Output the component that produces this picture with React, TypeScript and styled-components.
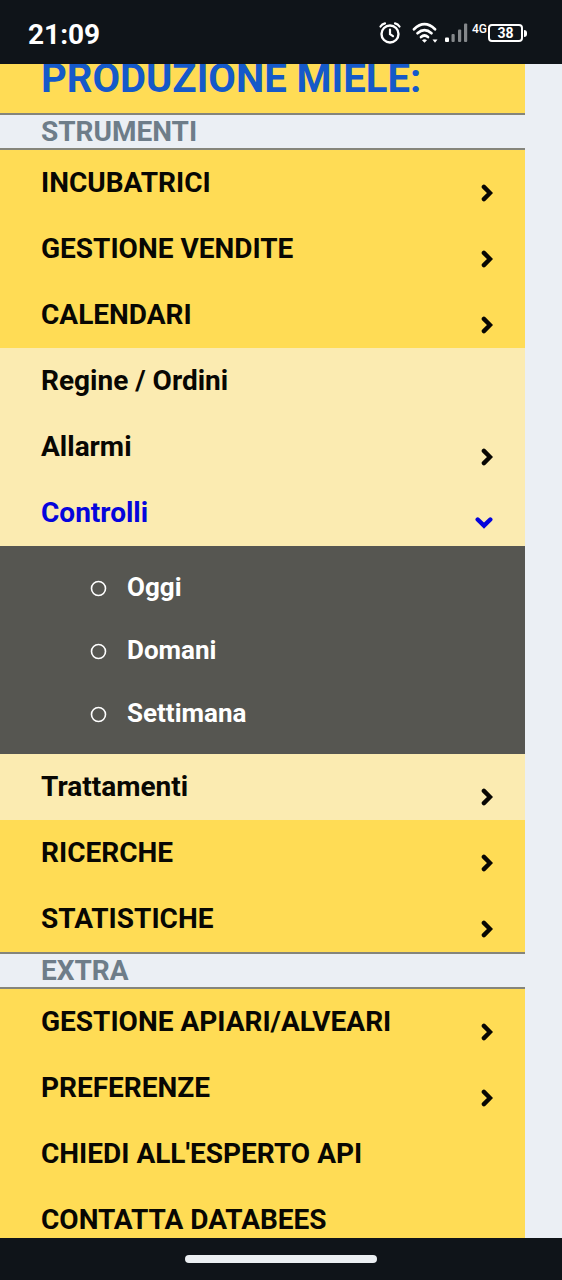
import React from "react";
import styled, { createGlobalStyle } from "styled-components";

const GlobalStyle = createGlobalStyle`
  *, *::before, *::after { box-sizing: border-box; }
  body { margin: 0; background: #ebeff4; font-family: Roboto, "Liberation Sans", sans-serif; }
  ul { list-style: none; margin: 0; padding: 0; }
`;

type Tone = "primary" | "pale";

const Screen = styled.div`
  display: flex;
  flex-direction: column;
  height: 100vh;
`;

const StatusBar = styled.header`
  display: flex;
  flex: none;
  align-items: flex-end;
  justify-content: space-between;
  height: 64px;
  padding: 0 35px 12px 28px;
  background: #0f1419;
  color: #fff;
`;

const Clock = styled.time`
  font-size: 28px;
  line-height: 34px;
  font-weight: 700;
`;

const StatusIcons = styled.div`
  display: flex;
  align-items: center;
  height: 38px;
  svg { display: block; }
`;

const AlarmSlot = styled.span`
  margin-right: 10px;
`;

const WifiSlot = styled.span`
  margin-right: 6px;
`;

const NetworkType = styled.span`
  align-self: flex-start;
  padding: 8px 1px 0 4px;
  font-size: 12px;
  line-height: 14px;
  font-weight: 500;
`;

const Battery = styled.span`
  display: flex;
  align-items: center;
  &::after {
    content: "";
    width: 3px;
    height: 7px;
    margin-left: 1px;
    border-radius: 0 3px 3px 0;
    background: #fff;
  }
`;

const BatteryLevel = styled.span`
  width: 35px;
  height: 18px;
  border: 2px solid #fff;
  border-radius: 4px;
  font-size: 14px;
  line-height: 14px;
  font-weight: 700;
  text-align: center;
`;

const Viewport = styled.main`
  flex: 1;
  min-height: 0;
  overflow: hidden;
  padding-right: 37px;
  background: #ebeff4;
`;

const Title = styled.h1`
  display: flex;
  align-items: flex-end;
  height: 49px;
  margin: 0;
  padding: 0 41px 10px;
  overflow: hidden;
  background: #ffdc55;
  color: #1559c9;
  font-size: 40px;
  line-height: 48px;
  font-weight: 700;
  white-space: nowrap;
`;

const SectionTitle = styled.h2`
  margin: 0;
  padding: 0 41px;
  border: solid #85857b;
  border-width: 2px 0;
  background: #ebeff4;
  color: #6e7d89;
  font-size: 28px;
  line-height: 33px;
  font-weight: 700;
`;

const MenuLink = styled.a<{ $tone: Tone; $open?: boolean }>`
  display: flex;
  align-items: center;
  justify-content: space-between;
  height: 66px;
  padding: 0 32px 0 41px;
  background: ${(p) => (p.$tone === "pale" ? "#fbebb1" : "#ffdc55")};
  color: ${(p) => (p.$open ? "#0505dc" : "#080703")};
  font-size: 28px;
  line-height: 34px;
  font-weight: 700;
  text-decoration: none;
  svg { flex: none; margin-top: 20px; }
`;

const SubMenu = styled.ul`
  && { padding: 9px 0 10px 90px; }
  background: #565651;
`;

const SubLink = styled.a`
  display: flex;
  align-items: center;
  gap: 20px;
  height: 63px;
  color: #fff;
  font-size: 26px;
  line-height: 32px;
  font-weight: 700;
  text-decoration: none;
  svg { margin-top: 4px; }
`;

const NavBar = styled.footer`
  display: flex;
  flex: none;
  justify-content: center;
  align-items: center;
  height: 42px;
  background: #0f1419;
`;

const HomeHandle = styled.div`
  width: 34%;
  height: 8px;
  border-radius: 4px;
  background: #ebeff2;
`;

const AlarmIcon = () => (
  <svg width="24" height="24" viewBox="0 0 24 24" fill="none" stroke="#fff" strokeLinecap="round" aria-hidden="true">
    <circle cx="12" cy="13" r="8.5" strokeWidth="2.4" />
    <path d="M12 8.5V13.2L15 15.2" strokeWidth="2.2" />
    <path d="M2.5 5.5Q4 3 7 2.4M21.5 5.5Q20 3 17 2.4" strokeWidth="2.2" />
  </svg>
);

const WifiIcon = () => (
  <svg width="27" height="22" viewBox="0 0 27 22" fill="none" stroke="#fff" strokeLinecap="round" aria-hidden="true">
    <path d="M2 7.2Q12.5 -2.8 23 7.2" strokeWidth="2.7" />
    <path d="M5.5 11.2Q12.5 5 19.5 11.2" strokeWidth="2.7" />
    <path d="M9 15Q12.5 12 16 15" strokeWidth="2.7" />
    <path d="M10 18.2Q12.5 16.5 15 18.2L12.5 20.8Z" fill="#fff" stroke="none" />
    <path d="M20.5 17.5H25.5L23 20.8Z" fill="#fff" stroke="none" />
  </svg>
);

const SignalIcon = () => (
  <svg width="23" height="20" viewBox="0 0 23 20" aria-hidden="true">
    <rect x="0" y="14.5" width="4" height="4.5" rx="1" fill="#fff" />
    <rect x="6.5" y="11" width="3.2" height="8" rx="1" fill="#85888b" />
    <rect x="13" y="6.5" width="3.2" height="12.5" rx="1" fill="#85888b" />
    <rect x="19" y="0.5" width="3.2" height="18.5" rx="1" fill="#85888b" />
  </svg>
);

const ChevronRight = () => (
  <svg width="12" height="18" viewBox="0 0 12 18" fill="none" stroke="currentColor" strokeWidth="4.4" strokeLinecap="round" aria-hidden="true">
    <path d="M2.9 2.9L9 9L2.9 15.1" />
  </svg>
);

const ChevronDown = () => (
  <svg width="18" height="12" viewBox="0 0 18 12" fill="none" stroke="currentColor" strokeWidth="4.4" strokeLinecap="round" aria-hidden="true">
    <path d="M2.7 2.5L9 8.6L15.3 2.5" />
  </svg>
);

const CircleIcon = () => (
  <svg width="17" height="17" viewBox="0 0 17 17" fill="none" stroke="#fff" strokeWidth="1.6" aria-hidden="true">
    <circle cx="8.5" cy="8.5" r="7" />
  </svg>
);

interface Entry {
  label: string;
  tone?: Tone;
  arrow?: boolean;
  children?: string[];
}

const tools: Entry[] = [
  { label: "INCUBATRICI", arrow: true },
  { label: "GESTIONE VENDITE", arrow: true },
  { label: "CALENDARI", arrow: true },
  { label: "Regine / Ordini", tone: "pale" },
  { label: "Allarmi", tone: "pale", arrow: true },
  { label: "Controlli", tone: "pale", children: ["Oggi", "Domani", "Settimana"] },
  { label: "Trattamenti", tone: "pale", arrow: true },
  { label: "RICERCHE", arrow: true },
  { label: "STATISTICHE", arrow: true },
];

const extras: Entry[] = [
  { label: "GESTIONE APIARI/ALVEARI", arrow: true },
  { label: "PREFERENZE", arrow: true },
  { label: "CHIEDI ALL'ESPERTO API" },
  { label: "CONTATTA DATABEES" },
];

const Menu = ({ entries }: { entries: Entry[] }) => (
  <ul>
    {entries.map(({ label, tone = "primary", arrow, children }) => (
      <li key={label}>
        <MenuLink href="#" $tone={tone} $open={!!children} aria-expanded={children ? true : undefined}>
          <span>{label}</span>
          {arrow && <ChevronRight />}
          {children && <ChevronDown />}
        </MenuLink>
        {children && (
          <SubMenu>
            {children.map((child) => (
              <li key={child}>
                <SubLink href="#">
                  <CircleIcon />
                  <span>{child}</span>
                </SubLink>
              </li>
            ))}
          </SubMenu>
        )}
      </li>
    ))}
  </ul>
);

export default function App() {
  return (
    <Screen>
      <GlobalStyle />
      <StatusBar>
        <Clock>21:09</Clock>
        <StatusIcons>
          <AlarmSlot><AlarmIcon /></AlarmSlot>
          <WifiSlot><WifiIcon /></WifiSlot>
          <SignalIcon />
          <NetworkType>4G</NetworkType>
          <Battery><BatteryLevel>38</BatteryLevel></Battery>
        </StatusIcons>
      </StatusBar>
      <Viewport>
        <Title>PRODUZIONE MIELE:</Title>
        <nav>
          <SectionTitle>STRUMENTI</SectionTitle>
          <Menu entries={tools} />
          <SectionTitle>EXTRA</SectionTitle>
          <Menu entries={extras} />
        </nav>
      </Viewport>
      <NavBar><HomeHandle /></NavBar>
    </Screen>
  );
}
